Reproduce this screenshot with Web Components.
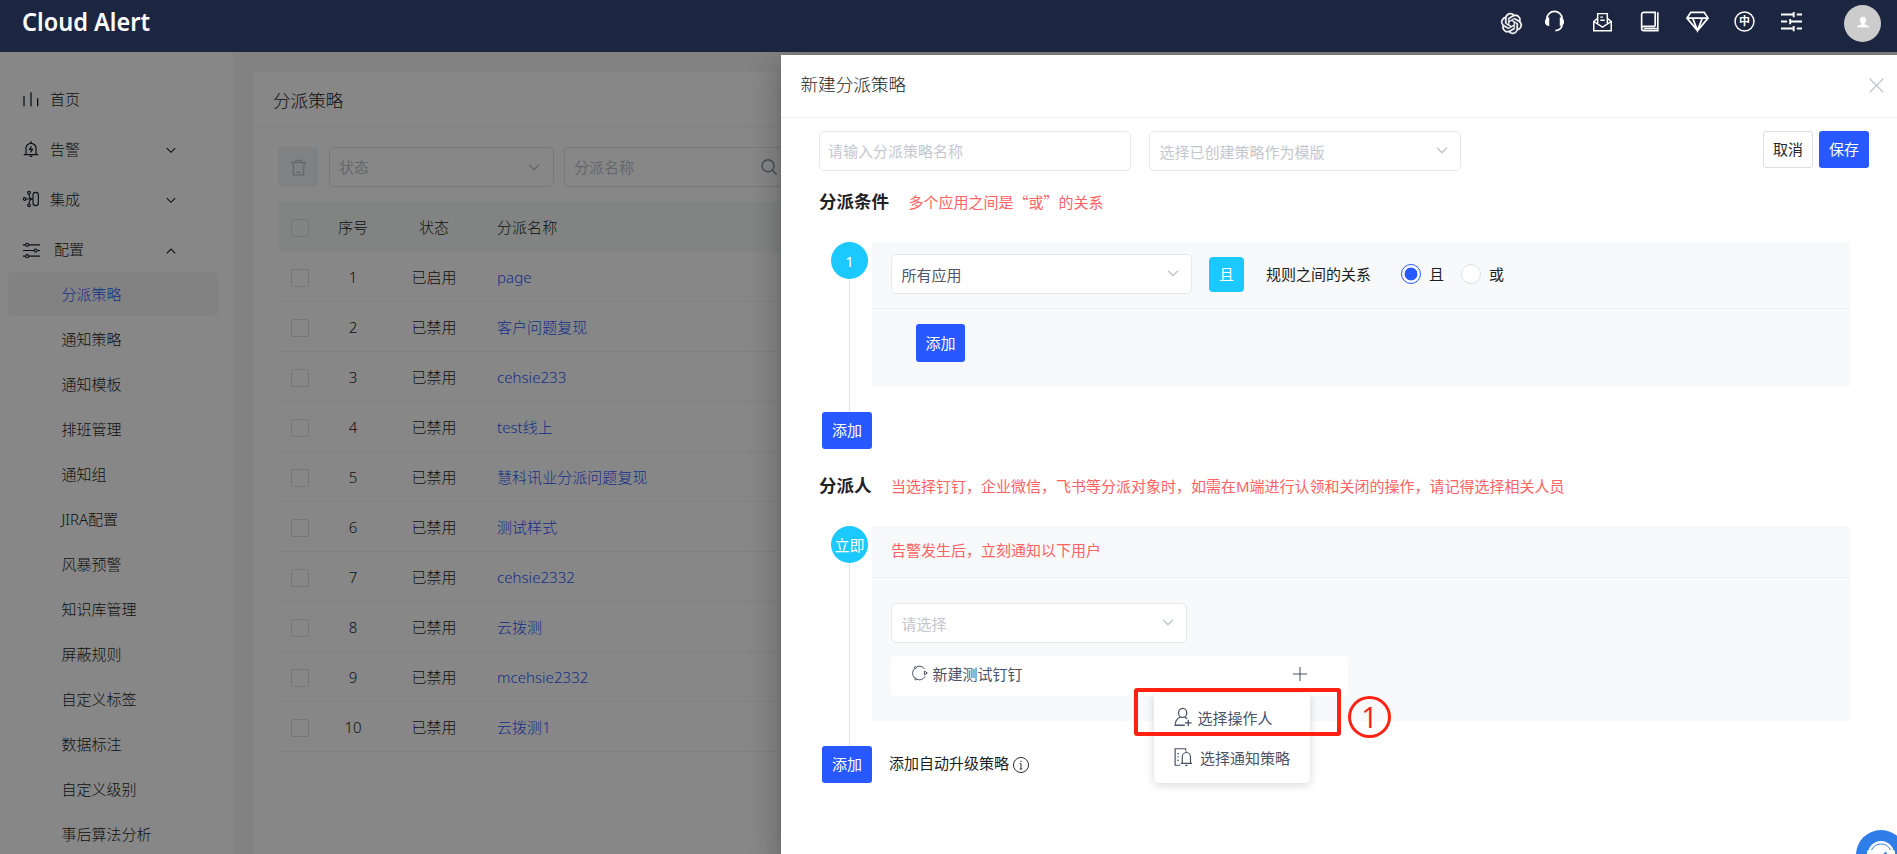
<!DOCTYPE html>
<html lang="zh-CN">
<head>
<meta charset="utf-8">
<title>Cloud Alert</title>
<style>
  html, body {
    margin: 0;
    height: 100%;
    overflow: hidden;
  }
  body {
    font-family: "Noto Sans", "Noto Sans CJK SC", sans-serif;
    font-size: 15px;
    font-weight: 300;
    line-height: 20px;
    color: #1c1e24;
  }
</style>
</head>
<body>
<alert-app></alert-app>
<script>
const ICONS = {
  openai: { fill: true, d: '<path stroke="currentColor" stroke-width=".4" d="M22.2819 9.8211a5.9847 5.9847 0 0 0-.5157-4.9108 6.0462 6.0462 0 0 0-6.5098-2.9A6.0651 6.0651 0 0 0 4.9807 4.1818a5.9847 5.9847 0 0 0-3.9977 2.9 6.0462 6.0462 0 0 0 .7427 7.0966 5.98 5.98 0 0 0 .511 4.9107 6.051 6.051 0 0 0 6.5146 2.9001A5.9847 5.9847 0 0 0 13.2599 24a6.0557 6.0557 0 0 0 5.7718-4.2058 5.9894 5.9894 0 0 0 3.9977-2.9001 6.0557 6.0557 0 0 0-.7475-7.0729zm-9.022 12.6081a4.4755 4.4755 0 0 1-2.8764-1.0408l.1419-.0804 4.7783-2.7582a.7948.7948 0 0 0 .3927-.6813v-6.7369l2.02 1.1686a.071.071 0 0 1 .038.052v5.5826a4.504 4.504 0 0 1-4.4945 4.4944zm-9.6607-4.1254a4.4708 4.4708 0 0 1-.5346-3.0137l.142.0852 4.783 2.7582a.7712.7712 0 0 0 .7806 0l5.8428-3.3685v2.3324a.0804.0804 0 0 1-.0332.0615L9.74 19.9502a4.4992 4.4992 0 0 1-6.1408-1.6464zM2.3408 7.8956a4.485 4.485 0 0 1 2.3655-1.9728V11.6a.7664.7664 0 0 0 .3879.6765l5.8144 3.3543-2.0201 1.1685a.0757.0757 0 0 1-.071 0l-4.8303-2.7865A4.504 4.504 0 0 1 2.3408 7.872zm16.5963 3.8558L13.1038 8.364 15.1192 7.2a.0757.0757 0 0 1 .071 0l4.8303 2.7913a4.4944 4.4944 0 0 1-.6765 8.1042v-5.6772a.79.79 0 0 0-.407-.667zm2.0107-3.0231l-.142-.0852-4.7735-2.7818a.7759.7759 0 0 0-.7854 0L9.409 9.2297V6.8974a.0662.0662 0 0 1 .0284-.0615l4.8303-2.7866a4.4992 4.4992 0 0 1 6.6802 4.66zM8.3065 12.863l-2.02-1.1638a.0804.0804 0 0 1-.038-.0567V6.0742a4.4992 4.4992 0 0 1 7.3757-3.4537l-.142.0805L8.704 5.459a.7948.7948 0 0 0-.3927.6813zm1.0976-2.3654l2.602-1.4998 2.6069 1.4998v2.9994l-2.5974 1.4997-2.6067-1.4997Z"/>' },
  headset: { w: 1.7, d: '<path d="M4 9a8 7.5 0 0 1 16 0v5c0 4-2 7-7 7.5"/><path d="M6.5 7.5v9.2C3.400 16.700 2 14.800 2 12.200s1.500-4.500 4.500-4.700zM17.500 7.500v9.200c3.100 0 4.500-1.900 4.500-4.500s-1.500-4.500-4.500-4.700z" fill="currentColor" stroke="none"/>' },
  mail: { w: 1.7, d: '<path d="M6.500 14V3h11v11M2 11.500v11h20v-11M2 12l10 6.500 10-6.500M6.500 8.500L2 12M17.500 8.500L22 12M9.500 7h3M9.500 10.500h5"/>' },
  book: { w: 1.9, d: '<path d="M18.500 17.500H5.500a2.500 2.500 0 0 0 0 5H21.500V1.500M18.500 17.500V1.500H5.500a2.500 2.500 0 0 0-2.500 2.500v16M5.500 20h15"/>' },
  diamond: { w: 1.8, d: '<path d="M5 2.500h14l4 6L12 21.500 1 8.500zM1 8.500h22M7 8.500l5 13 5-13"/>' },
  zh: { w: 1.7, d: '<circle cx="12" cy="12" r="10.800"/><text x="12" y="16.300" text-anchor="middle" font-size="12.500" font-weight="700" fill="currentColor" stroke="none">中</text>' },
  tune: { w: 2.2, d: '<path d="M0 4h14M18 4h6M14.500 1v6M0 12h7M11 12h13M10.500 9v6M0 20h14M18 20h6M14.500 17v6"/>' },
  user: { fill: true, d: '<path d="M12 3c3.600 0 5.200 2.300 5.200 5.600 0 2.600-1 4.700-2.400 6v1.600l6.200 2.400c1 .4 1.500 1.200 1.500 2.400H1.500c0-1.200.5-2 1.500-2.400l6.200-2.400v-1.600c-1.400-1.300-2.400-3.400-2.400-6C6.800 5.300 8.400 3 12 3z"/>' },
  bars: { w: 1.9, d: '<path d="M1.500 8v15M12 2v21M22 11v12"/>' },
  bell: { w: 1.8, d: '<path d="M4.500 20.500V11a7.500 7.500 0 0 1 15 0v9.500M1 20.500h22M10 23.200h4M10.500 1.500h3M12.800 8l-3 4.500h4.400l-3 4.500"/>' },
  link: { w: 1.7, d: '<rect x="15" y="2" width="8" height="20" rx="4"/><circle cx="2.500" cy="12" r="2"/><circle cx="9" cy="2.500" r="2"/><circle cx="9" cy="21.500" r="2"/><path d="M4.500 12H15M9 4.500c0 4.500 1.500 7.500 6 7.500M9 19.500c0-4.500 1.500-7.500 6-7.500"/>' },
  sliders: { w: 1.6, d: '<path d="M0 4h3.500M8 4h16M0 12h15.500M20 12h4M0 20h3.500M8 20h16"/><circle cx="5.800" cy="4" r="2.200"/><circle cx="17.800" cy="12" r="2.200"/><circle cx="5.800" cy="20" r="2.200"/>' },
  down: { w: 2.8, d: '<path d="M2 7.500l10 10 10-10"/>' },
  up: { w: 2.8, d: '<path d="M2 17.500l10-10 10 10"/>' },
  trash: { w: 1.9, d: '<path d="M1.500 5h21M8 5V2h8v3M4 5l1 17.500h14L20 5M9 18.500h6"/>' },
  search: { w: 2.2, d: '<circle cx="10.500" cy="10" r="9"/><path d="M17 16.500l6.500 7"/>' },
  close: { w: 1.9, d: '<path d="M1 1l22 22M23 1L1 23"/>' },
  plus: { w: 1.8, d: '<path d="M12 0v24M0 12h24"/>' },
  ring: { w: 1.5, d: '<path d="M7 2.800a10 10 0 0 1 12 3.200M3.500 5.500a11 11 0 0 0 .5 14M7.500 21.500a10 10 0 0 0 12-4.500"/><circle cx="5" cy="4" r="1.500"/><circle cx="5.500" cy="21" r="1.300"/><path d="M18.500 9l4.500 3-4.500 3z"/>' },
  operator: { w: 1.7, d: '<ellipse cx="11.500" cy="6.500" rx="5.500" ry="6"/><path d="M8.500 12C4 14 1.500 17.500 1.500 23h13M14.500 12l3 2.300M19 15.500v8.500M14.500 19.800h9"/>' },
  notice: { w: 1.6, d: '<path d="M15.500 3.500V1H1.500v22H8.500M4.500 7.500h2M4.500 12h2M4.500 16.500h2M11 20.500v-8.500a5.500 6 0 0 1 11 0v8.500M9 20.500h15M15 23.200h3M15.500 5.500h2"/>' },
  info: { w: 1.4, d: '<circle cx="12" cy="12" r="11.300"/><path d="M12 10v8M10 10h2M10 18h4M12 5.500v2"/>' },
};

class AlertIcon extends HTMLElement {
  connectedCallback() {
    const icon = ICONS[this.getAttribute("name")];
    const size = this.getAttribute("size") || 24;
    const paint = icon.fill
      ? 'fill="currentColor"'
      : `fill="none" stroke="currentColor" stroke-width="${icon.w}"`;
    this.attachShadow({ mode: "open" }).innerHTML = `
      <style>
        :host { display: block; flex: none; width: ${size}px; height: ${size}px; }
        svg { display: block; overflow: visible; }
      </style>
      <svg width="${size}" height="${size}" viewBox="0 0 24 24" ${paint}>${icon.d}</svg>
    `;
  }
}
customElements.define("alert-icon", AlertIcon);

class AlertHeader extends HTMLElement {
  connectedCallback() {
    this.attachShadow({ mode: "open" }).innerHTML = `
      <style>
        :host {
          display: flex;
          align-items: flex-start;
          justify-content: space-between;
          box-sizing: border-box;
          height: 52px;
          padding: 0 16px 0 22px;
          background: #1c2641;
          color: #fff;
          position: relative;
          z-index: 3;
        }
        h1 {
          margin: 6px 0 0;
          font: 600 26px/30px "Noto Sans", sans-serif;
          transform: scaleX(.905);
          transform-origin: 0 0;
          white-space: nowrap;
        }
        nav { display: flex; }
        .cell { display: flex; align-items: center; justify-content: center; width: 47.400px; height: 43px; }
        .cell:first-child { width: 40px; padding-top: 2px; }
        .avatar {
          display: flex; align-items: center; justify-content: center;
          width: 37px; height: 37px; margin: 5px 0 0 28.500px;
          border-radius: 50%; background: #ccc;
        }
        .avatar alert-icon { margin-top: -4px; }
      </style>
      <h1>Cloud Alert</h1>
      <nav>
        <span class="cell"><alert-icon name="openai" size="21"></alert-icon></span>
        <span class="cell"><alert-icon name="headset" size="23"></alert-icon></span>
        <span class="cell"><alert-icon name="mail" size="21"></alert-icon></span>
        <span class="cell"><alert-icon name="book" size="21"></alert-icon></span>
        <span class="cell"><alert-icon name="diamond" size="23"></alert-icon></span>
        <span class="cell"><alert-icon name="zh" size="21"></alert-icon></span>
        <span class="cell"><alert-icon name="tune" size="21"></alert-icon></span>
        <span class="avatar"><alert-icon name="user" size="14"></alert-icon></span>
      </nav>
    `;
  }
}
customElements.define("alert-header", AlertHeader);

class AlertSidebar extends HTMLElement {
  connectedCallback() {
    const subs = ["分派策略", "通知策略", "通知模板", "排班管理", "通知组", "JIRA配置", "风暴预警",
      "知识库管理", "屏蔽规则", "自定义标签", "数据标注", "自定义级别", "事后算法分析"];
    const menus = [
      ["bars", "首页", ""], ["bell", "告警", "down"], ["link", "集成", "down"], ["sliders", "配置", "up"],
    ];
    this.attachShadow({ mode: "open" }).innerHTML = `
      <style>
        :host {
          display: block;
          flex: none;
          box-sizing: border-box;
          width: 233px;
          padding: 22px 15px 0 8px;
          background: #fff;
          overflow: hidden;
        }
        .menu { display: flex; align-items: center; height: 50px; padding: 0 42.500px 0 15px; }
        .menu span { flex: 1; margin-left: 11px; }
        .menu.wide span { margin-left: 14px; }
        .menu alert-icon:last-child { margin-top: 2px; }
        .menu.wide alert-icon { margin-top: 3px; }
        .subs { margin-top: -2px; }
        .sub { height: 44px; margin-bottom: 1px; padding-left: 53.500px; line-height: 44px; border-radius: 5px; }
        .sub.active { background: #f5f5f6; color: #2858ff; }
      </style>
      ${menus.map(([icon, label, arrow]) => `
        <div class="menu ${arrow === "up" ? "wide" : ""}">
          <alert-icon name="${icon}" size="${arrow === "up" ? 17 : 16}"></alert-icon>
          <span>${label}</span>
          ${arrow ? `<alert-icon name="${arrow}" size="10"></alert-icon>` : ""}
        </div>`).join("")}
      <div class="subs">
        ${subs.map((s, i) => `<div class="sub ${i ? "" : "active"}">${s}</div>`).join("")}
      </div>
    `;
  }
}
customElements.define("alert-sidebar", AlertSidebar);

class StrategyTable extends HTMLElement {
  connectedCallback() {
    const names = ["page", "客户问题复现", "cehsie233", "test线上", "慧科讯业分派问题复现",
      "测试样式", "cehsie2332", "云拨测", "mcehsie2332", "云拨测1"];
    this.attachShadow({ mode: "open" }).innerHTML = `
      <style>
        :host { display: block; }
        .row {
          display: grid;
          grid-template-columns: 34px 56px 106px 1fr;
          align-items: center;
          box-sizing: border-box;
          height: 50px;
          padding-left: 13px;
          border-bottom: 1px solid #f4f4f6;
          text-align: center;
        }
        .head { background: #f5faf8; border-color: #f5faf8; border-radius: 4px 0 0 0; }
        .box {
          box-sizing: border-box; width: 18px; height: 18px; margin-top: 2px;
          border: 1px solid #dcdee4; border-radius: 2px;
        }
        .name { text-align: left; padding-left: 10px; color: #2858ff; letter-spacing: .05px; }
        .head .name { color: inherit; }
      </style>
      <div class="row head"><i class="box"></i><span>序号</span><span>状态</span><span class="name">分派名称</span></div>
      ${names.map((n, i) => `
        <div class="row">
          <i class="box"></i><span>${i + 1}</span><span>${i ? "已禁用" : "已启用"}</span><span class="name">${n}</span>
        </div>`).join("")}
    `;
  }
}
customElements.define("strategy-table", StrategyTable);

class StrategyPage extends HTMLElement {
  connectedCallback() {
    this.attachShadow({ mode: "open" }).innerHTML = `
      <style>
        :host { display: block; flex: 1; padding: 20px 20px 0; background: #f6f6f7; }
        .card { height: 100%; background: #fff; }
        h2 {
          margin: 0; box-sizing: border-box; height: 55px; padding-left: 20px;
          font-size: 17.600px; font-weight: inherit; line-height: 56px;
          border-bottom: 1px solid #f4f4f6;
        }
        .tools { display: flex; margin: 20px 25px 15px; height: 40px; }
        .trash {
          display: flex; align-items: center; justify-content: center;
          width: 40px; margin-right: 11px; background: #f2f4f8; border-radius: 4px; color: #c0c4cc;
        }
        .field {
          display: flex; align-items: center; justify-content: space-between;
          box-sizing: border-box; width: 225px; margin-right: 10px; padding: 0 13px 0 9px;
          border: 1px solid #e2e4ea; border-radius: 5px; color: #c0c4cc; font-weight: 400;
        }
        .field .lens { color: #8a8f99; }
        .field:last-child { padding-right: 11px; }
        strategy-table { margin-left: 25px; }
      </style>
      <div class="card">
        <h2>分派策略</h2>
        <div class="tools">
          <div class="trash"><alert-icon name="trash" size="17"></alert-icon></div>
          <div class="field">状态<alert-icon name="down" size="12"></alert-icon></div>
          <div class="field">分派名称<alert-icon class="lens" name="search" size="16"></alert-icon></div>
        </div>
        <strategy-table></strategy-table>
      </div>
    `;
  }
}
customElements.define("strategy-page", StrategyPage);

class FormButton extends HTMLElement {
  connectedCallback() {
    this.attachShadow({ mode: "open" }).innerHTML = `
      <style>
        :host {
          display: flex; flex: none; align-items: center; justify-content: center;
          box-sizing: border-box; width: 50px; height: 37px; padding-bottom: 1px;
          background: #2858ff; color: #fff; border-radius: 3px; font-weight: 400;
        }
        :host([plain]) { background: #fff; color: #26282e; border: 1px solid #dcdee6; }
      </style>
      <slot></slot>
    `;
  }
}
customElements.define("form-button", FormButton);

class FormField extends HTMLElement {
  connectedCallback() {
    const arrow = this.hasAttribute("arrow");
    this.attachShadow({ mode: "open" }).innerHTML = `
      <style>
        :host {
          display: flex; flex: none; align-items: center; justify-content: space-between;
          box-sizing: border-box; width: ${this.getAttribute("width")}px; height: 40px;
          padding: 0 12px 0 ${arrow ? 9.5 : 8}px;
          background: #fff; border: 1px solid #e6e8ee; border-radius: 5px; color: #c3c7cf; font-weight: 400;
        }
        :host([filled]) { color: #50566a; }
        span { padding-top: ${arrow ? 1 : 0}px; }
        alert-icon { color: #c0c4cc; margin-top: -2px; }
      </style>
      <span><slot></slot></span>
      ${arrow ? '<alert-icon name="down" size="12"></alert-icon>' : ""}
    `;
  }
}
customElements.define("form-field", FormField);

class FormSection extends HTMLElement {
  connectedCallback() {
    const hint = this.getAttribute("hint");
    // curly quotes are full width only in the CJK face
    const family = hint.includes("“") ? '"Noto Sans CJK SC", sans-serif' : "inherit";
    this.attachShadow({ mode: "open" }).innerHTML = `
      <style>
        :host { display: block; }
        header { display: flex; align-items: center; height: 30px; }
        h3 { margin: -2px 20px 0 0; font-size: 17.500px; font-weight: 700; line-height: 30px; color: #1f2126; }
        .hint { color: #ff6262; font-family: ${family}; font-weight: 400; margin: -1px 0 0 -.500px; }
        .body { display: flex; margin: 25px 0 0 12px; }
        .rail { display: flex; flex-direction: column; align-items: center; width: 37px; margin-right: 4px; }
        .badge {
          display: flex; align-items: center; justify-content: center; flex: none;
          width: 37px; height: 37px; border-radius: 50%; background: #1bc8ff; color: #fff;
          font-weight: 400; line-height: 18px;
        }
        .line { flex: 1; width: 1px; background: #d3e8fa; }
        .panel { flex: 1; margin-bottom: 25px; background: #f7f9fb; }
        .bar { display: flex; align-items: center; box-sizing: border-box; padding-left: 19px; border-bottom: 1px solid #eceef2; }
        footer { display: flex; align-items: center; margin-left: 3px; gap: 17px; }
      </style>
      <header><h3>${this.getAttribute("heading")}</h3><span class="hint">${hint}</span></header>
      <div class="body">
        <div class="rail"><span class="badge">${this.getAttribute("badge")}</span><i class="line"></i></div>
        <div class="panel">
          <div class="bar" style="height:${this.getAttribute("bar")}px"><slot name="bar"></slot></div>
          <slot></slot>
        </div>
      </div>
      <footer><form-button>添加</form-button><slot name="footer"></slot></footer>
    `;
  }
}
customElements.define("form-section", FormSection);

class ReceiverRow extends HTMLElement {
  connectedCallback() {
    this.attachShadow({ mode: "open" }).innerHTML = `
      <style>
        :host {
          display: flex; align-items: center; box-sizing: border-box;
          width: 457px; height: 40px; padding: 0 41px 4px 21px;
          background: #fff; border-radius: 4px; color: #4a5268; position: relative; font-weight: 400;
        }
        span { flex: 1; margin-left: 4.500px; }
        .ring { margin-top: -3px; }
        .menu {
          position: absolute; left: 263px; top: 37px; z-index: 1;
          box-sizing: border-box; width: 156px; height: 90px; padding: 5px 0 5px 20px;
          background: #fff; border-radius: 5px; box-shadow: 0 2px 10px rgba(0, 0, 0, .16);
        }
        .item { display: flex; align-items: center; height: 40px; }
        .item alert-icon { margin-top: -2px; }
        .item span { margin-left: 5.500px; }
        .item:last-child span { margin-left: 8px; }
        .mark {
          position: absolute; left: 243px; top: 32px; z-index: 2;
          box-sizing: border-box; width: 207px; height: 48px;
          border: 4px solid #ff2113; border-radius: 3px;
        }
        .step {
          position: absolute; left: 457px; top: 40px; z-index: 2;
          display: flex; align-items: center; justify-content: center;
          box-sizing: border-box; width: 43px; height: 42px;
          border: 3px solid #ff2113; border-radius: 50%;
          color: #ff2113; font: 400 29px/30px "Open Sans", sans-serif;
        }
      </style>
      <alert-icon class="ring" name="ring" size="16"></alert-icon>
      <span>新建测试钉钉</span>
      <alert-icon name="plus" size="14"></alert-icon>
      <div class="menu">
        <div class="item"><alert-icon name="operator" size="18"></alert-icon><span>选择操作人</span></div>
        <div class="item"><alert-icon name="notice" size="18"></alert-icon><span>选择通知策略</span></div>
      </div>
      <div class="mark"></div>
      <div class="step">1</div>
    `;
  }
}
customElements.define("receiver-row", ReceiverRow);

class StrategyDrawer extends HTMLElement {
  connectedCallback() {
    this.attachShadow({ mode: "open" }).innerHTML = `
      <style>
        :host {
          display: block; position: absolute; left: 781px; right: 0; top: 55px; bottom: 0; z-index: 2;
          background: #fff;
          box-shadow: 0 8px 10px -5px rgba(0, 0, 0, .2), 0 16px 24px 2px rgba(0, 0, 0, .14), 0 6px 30px 5px rgba(0, 0, 0, .12);
        }
        .title {
          display: flex; align-items: center; justify-content: space-between;
          box-sizing: border-box; height: 63px; padding: 0 13px 5px 19.500px;
          border-bottom: 1px solid #f0f1f4; font-size: 17.600px;
        }
        .title alert-icon { color: #b9bdc8; margin-top: 3px; }
        .form { padding: 13px 47px 0 38px; }
        .top { display: flex; margin-right: -19px; gap: 18px; margin-bottom: 16px; }
        .actions { display: flex; gap: 6px; margin-left: auto; }
        .rule { display: flex; align-items: center; margin-top: -2px; font-weight: 400; }
        .rule > span { padding-bottom: 1px; }
        .tag {
          display: flex; align-items: center; justify-content: center; flex: none;
          box-sizing: border-box; width: 35px; height: 35px; margin: 0 22px 0 17px;
          background: #1bc8ff; color: #fff; border-radius: 4px;
        }
        .relation { margin-right: 30px; }
        .radio {
          box-sizing: border-box; width: 20px; height: 20px; margin-right: 8px;
          background: #fff; border: 1px solid #dfe1e6; border-radius: 50%;
        }
        .radio.on { border-color: #2858ff; background: radial-gradient(circle, #2858ff 6px, #fff 6.800px); }
        .radio.on + span { margin-right: 17px; }
        .cond { display: flex; height: 78px; }
        .inner { width: 49px; height: 38px; margin: 15px 0 0 44px; }
        .people { height: 118px; padding: 25px 0 0 19px; }
        .people receiver-row { margin-top: 13px; }
        .warn { color: #ff6262; font-weight: 400; padding-bottom: 3px; }
        .upgrade { display: flex; align-items: center; gap: 4px; padding-bottom: 3px; font-weight: 400; }
        .upgrade alert-icon { margin-top: 3px; }
        .assignees { margin-top: 22px; }
      </style>
      <div class="title"><span>新建分派策略</span><alert-icon name="close" size="15"></alert-icon></div>
      <div class="form">
        <div class="top">
          <form-field width="312">请输入分派策略名称</form-field>
          <form-field width="312" arrow>选择已创建策略作为模版</form-field>
          <div class="actions"><form-button plain>取消</form-button><form-button>保存</form-button></div>
        </div>
        <form-section heading="分派条件" hint="多个应用之间是“或”的关系" badge="1" bar="67">
          <div slot="bar" class="rule">
            <form-field width="301" arrow filled>所有应用</form-field>
            <span class="tag">且</span>
            <span class="relation">规则之间的关系</span>
            <i class="radio on"></i><span>且</span>
            <i class="radio"></i><span>或</span>
          </div>
          <div class="cond"><form-button class="inner">添加</form-button></div>
        </form-section>
        <form-section class="assignees" heading="分派人" hint="当选择钉钉，企业微信，飞书等分派对象时，如需在M端进行认领和关闭的操作，请记得选择相关人员" badge="立即" bar="52">
          <span slot="bar" class="warn">告警发生后，立刻通知以下用户</span>
          <div class="people">
            <form-field width="296" arrow>请选择</form-field>
            <receiver-row></receiver-row>
          </div>
          <div slot="footer" class="upgrade">添加自动升级策略<alert-icon name="info" size="16"></alert-icon></div>
        </form-section>
      </div>
    `;
  }
}
customElements.define("strategy-drawer", StrategyDrawer);

class SupportBubble extends HTMLElement {
  connectedCallback() {
    this.attachShadow({ mode: "open" }).innerHTML = `
      <style>
        :host { display: block; position: absolute; left: 1856px; top: 830px; z-index: 4; width: 50px; height: 50px; }
      </style>
      <svg width="50" height="50" viewBox="0 0 50 50">
        <circle cx="25" cy="25" r="25" fill="#2f7de9"/>
        <path d="M12 24a13 13 0 0 1 26 0" fill="#fff"/>
        <path d="M15.500 20a10.500 10.500 0 0 1 19 0" fill="none" stroke="#2f7de9" stroke-width="1"/>
        <path d="M26 25l4-3.500 1.500 3.500z" fill="#2f7de9"/>
        <rect x="11" y="20" width="5" height="9" rx="2" fill="#fff"/>
        <rect x="34" y="20" width="5" height="9" rx="2" fill="#fff"/>
      </svg>
    `;
  }
}
customElements.define("support-bubble", SupportBubble);

class AlertApp extends HTMLElement {
  connectedCallback() {
    this.attachShadow({ mode: "open" }).innerHTML = `
      <style>
        :host { display: flex; flex-direction: column; height: 100vh; position: relative; overflow: hidden; }
        main { display: flex; flex: 1; min-height: 0; }
        .mask { position: absolute; inset: 52px 0 0; z-index: 1; background: rgba(0, 0, 0, .47); }
      </style>
      <alert-header></alert-header>
      <main>
        <alert-sidebar></alert-sidebar>
        <strategy-page></strategy-page>
      </main>
      <div class="mask"></div>
      <strategy-drawer></strategy-drawer>
      <support-bubble></support-bubble>
    `;
  }
}
customElements.define("alert-app", AlertApp);
</script>
</body>
</html>
